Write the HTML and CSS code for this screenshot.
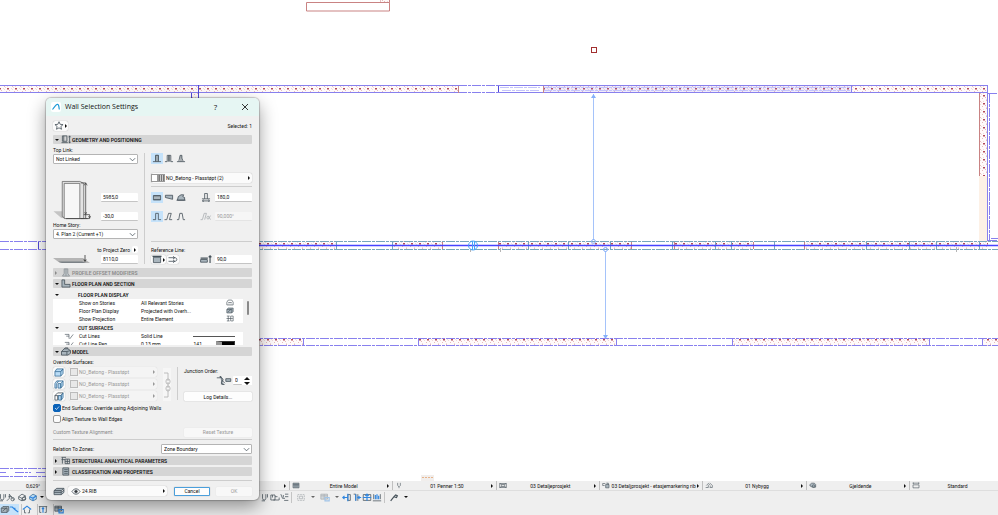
FILE: index.html
```
<!DOCTYPE html>
<html lang="en">
	<head>
		<meta charset="UTF-8">
		<title>Wall Selection Settings</title>
		<link rel="stylesheet" href="styles.css">
	</head>
	<body>
		<svg class="defs" width="0" height="0" aria-hidden="true">
			<defs>
				<pattern id="concrete" width="8" height="8" patternUnits="userSpaceOnUse">
					<rect width="8" height="8" fill="#fffafa"/>
					<path d="M0 1.500h1M6 0.500h1M2 6.500h1M5 5.500h1" stroke="#e6bcbc"/>
					<path d="M3 1.500h1M7 3.500h1M0 4.500h1M6 7.500h1M1 2.500h1" stroke="#f0dada"/>
					<rect x="3" y="3" width="2" height="1.500" fill="#b04a5a"/>
				</pattern>
				<pattern id="concrete-outer" href="#concrete" patternTransform="translate(4 5)"/>
				<pattern id="concrete-side" href="#concrete" patternTransform="translate(4 4)"/>
			</defs>
			<symbol id="wall" viewBox="0 0 12 10"><path d="M1.500 8.500h3v-7h3v7h3"/><path class="f" d="M4.500 1.500h3v7h-3z"/></symbol>
			<symbol id="wall-multi" viewBox="0 0 12 10"><path d="M1.500 8.500h2.500v-7h4v7h2.500M5.400 1.500v7M6.700 1.500v7"/></symbol>
			<symbol id="wall-complex" viewBox="0 0 12 10"><path d="M1.500 8.500h2l1.500-7h2v3l1.500 4h2M6 1.500v7M3.500 8.500h5"/></symbol>
			<symbol id="wall-open" viewBox="0 0 12 10"><path d="M1.500 8.500h3v-7h3v7h3"/></symbol>
			<symbol id="wall-slant" viewBox="0 0 12 10"><path d="M1 8.500h2.500l2-7h3l-2 7h3"/></symbol>
			<symbol id="wall-taper" viewBox="0 0 12 10"><path d="M1.500 8.500h2l1.200-7h2.600l1.200 7h2"/></symbol>
			<symbol id="plan-straight" viewBox="0 0 12 10"><path class="f" d="M2 3h8v4.500h-8z"/><path d="M2 3h8M2 7.500h8"/></symbol>
			<symbol id="plan-trap" viewBox="0 0 12 10"><path class="f" d="M2 2.500h8v4.500l-8-2z"/></symbol>
			<symbol id="plan-poly" viewBox="0 0 12 10"><path class="f" d="M2 8l1-4 3-2h3l-1 2 2 1v3z"/><path d="M1 8h10"/></symbol>
			<symbol id="width" viewBox="0 0 12 10"><path d="M4.500 6.500v-6h3v6M1.500 6.500h9M2 8.800h8M3.500 7.500l-1.500 1.300 1.500 1M8.500 7.500l1.500 1.300-1.500 1"/></symbol>
			<symbol id="angle" viewBox="0 0 12 10"><path d="M0 8.500h2l2-7h2.500l-2 7M11 4l-2.500 4c-2 0-2-3.500 0-3.500l2.500 4"/></symbol>
			<symbol id="refline" viewBox="0 0 12 10"><path class="f" d="M2 2.500h8v6h-8z"/><path d="M1 1.500h10" stroke-width="1.500"/></symbol>
			<symbol id="flip" viewBox="0 0 12 10"><path d="M1 3h7M1 7h7M6 1.500l2 1.500-2 1.500M6 5.500l2 1.500-2 1.500M8 3c3 0 3 4 0 4"/></symbol>
			<symbol id="offset" viewBox="0 0 12 10"><path class="f" d="M0 5h7.500v3h-7.500z"/><path d="M0 3.500h8M10.500 1v8M9 2.500l1.500-1.500 1.500 1.500" stroke-width="1.300"/></symbol>
			<symbol id="geometry" viewBox="0 0 12 10"><path d="M2 1h5v6h-5zM3.500 1v6M1 8.500h7M10 1v8M9 2.500l1-1.500 1 1.500M9 7.500l1 1.500 1-1.500"/></symbol>
			<symbol id="profile" viewBox="0 0 12 10"><path class="f" d="M2 9h8l-2-3v-5h-4v5z"/><path d="M6 1v8"/></symbol>
			<symbol id="floorplan" viewBox="0 0 12 10"><path class="f" d="M1.500 1h3v5h6v3h-9z"/></symbol>
			<symbol id="model" viewBox="0 0 12 10"><path class="f" d="M1 5l3-3h4l3 2v3l-3 2h-7z"/><path d="M1 5h6l4-1M7 5v4M4 2l1-1h3v1"/></symbol>
			<symbol id="structural" viewBox="0 0 12 10"><path d="M1 1.500h5M2 1.500v7M1 4h4M5 3.500h5v5h-5zM7.500 3.500v5M5 6h5"/></symbol>
			<symbol id="classification" viewBox="0 0 12 10"><path class="f" d="M2.500 1h6.500v8h-6.500z"/><path d="M4 3h4M4 5h4M4 7h4"/></symbol>
			<symbol id="stories" viewBox="0 0 12 10"><path d="M1.500 8.500h9v-4l-2-3h-5l-2 3zM3.500 5h5M4 7h1M7 7h1"/></symbol>
			<symbol id="display" viewBox="0 0 12 10"><path class="f" d="M1.500 3.500l2-2h7v5l-2 2h-7z"/><path d="M1.500 3.500h7v5M3 7l5-4"/></symbol>
			<symbol id="projection" viewBox="0 0 12 10"><path d="M1.500 1.500h4M1.500 8.500h4M3.500 1.500v7M7 1.500h3.500v7h-3.500zM1 5h9"/></symbol>
			<symbol id="cutline" viewBox="0 0 12 10"><path d="M0 2h6v6M2 4.500h4M7 8.500l5-6.500"/></symbol>
			<symbol id="surface" viewBox="0 0 12 10"><path class="b" d="M1.500 4h6.500v5h-6.500zM1.500 4l2-3h7l-2.500 3M8 4l2.500-3v5l-2.500 3"/></symbol>
			<symbol id="surface-side" viewBox="0 0 12 10"><path class="b" d="M1.500 4l2-3h7l-2.500 3v5l2.500-3v-5M1.500 4v5h2v-5l2-3M5 4h3v5h-3z"/></symbol>
			<symbol id="surface-end" viewBox="0 0 12 10"><path d="M1.500 4h3v5h-3zM1.500 4l3-3h6l-2.500 3h-3.500"/><path class="b" d="M5.500 4h3v5h-3zM8.500 4l2-3v5l-2 3z"/></symbol>
			<symbol id="star" viewBox="0 0 12 10"><path d="M6 0.800l1.300 2.900 3.200.3-2.400 2.100.7 3.100-2.800-1.600-2.800 1.600.7-3.100-2.400-2.100 3.200-.3z"/></symbol>
			<symbol id="junction" viewBox="0 0 16 10"><path d="M0 2h4v-2l3 4-2 5 4 1M5 4l4 4" /><path class="f" d="M10 3h5.500v3h-5.500zM3 1l3 2-1 5 3 1.500"/></symbol>
			<symbol id="layer" viewBox="0 0 12 10"><path class="f" d="M0.500 4l3-2.500h8l-3 2.500z"/><path class="f" d="M0.500 4v4.500h8v-4.500zM8.500 8.500l3-2.500v-4.500"/><path d="M0.500 6h8l3-2.500"/></symbol>
			<symbol id="eye" viewBox="0 0 12 10"><path d="M1.500 5c2.500-4 6.500-4 9 0c-2.500 4-6.500 4-9 0z"/><circle cx="6" cy="5" r="1.500" fill="#333"/></symbol>
			<symbol id="chevron" viewBox="0 0 8 8"><path d="M1 2.500l3 3 3-3"/></symbol>
			<symbol id="node" viewBox="0 0 12 10"><path d="M1 9l3-3v-5l3 4 3 3M3 4h4"/><circle cx="8" cy="7" r="2"/></symbol>
			<symbol id="cube" viewBox="0 0 12 10"><path d="M2 4l4-3 4 2v4l-4 2-4-2zM2 4l4 2 4-3M6 6v3"/><circle cx="8.500" cy="6.500" r="2"/></symbol>
			<symbol id="plane" viewBox="0 0 12 10"><path class="b" d="M2 4l4-3 4 2v4l-4 2-4-2z"/><path class="a" d="M2 4l4 2 4-3M6 6v3"/></symbol>
			<symbol id="gravity" viewBox="0 0 12 10"><path d="M3 1v5a2 2 0 0 0 4 0v-5M2 9h4M9 1v4"/></symbol>
			<symbol id="guide" viewBox="0 0 12 10"><path d="M1 2h5v6h-5zM6 4h3M4 8h7v-3M3 2v3"/></symbol>
			<symbol id="vee" viewBox="0 0 12 10"><path d="M1 1l2 5h3M6 1h4M6 4h4M5 8.500h5M4 2v3"/></symbol>
			<symbol id="marquee" viewBox="0 0 12 10"><path d="M2 1.500h8v7h-8z" stroke-dasharray="2 1"/><path d="M4 3.500h4v3h-4z"/></symbol>
			<symbol id="align-left" viewBox="0 0 12 10"><path d="M7 1.500h3v7h-3z"/><path class="a" d="M1 5h6M3 3l-2 2 2 2M7 0.500v9"/></symbol>
			<symbol id="align-mid" viewBox="0 0 12 10"><path d="M2 1h2.500v8M7 1v8"/><path class="a" d="M4.500 1v8M7 5h4M9 3.500l-2 1.500 2 1.500"/></symbol>
			<symbol id="align-top" viewBox="0 0 12 10"><path d="M1.500 1.500h9v7h-9z"/><path class="a" d="M1 5h10M6 1v8M4 3l2-2 2 2"/></symbol>
			<symbol id="align-bottom" viewBox="0 0 12 10"><path d="M1 9h10M2 1v6M10 1v6"/><path class="a" d="M4 2v5M6 1v6M8 3v4"/></symbol>
			<symbol id="wand" viewBox="0 0 12 10"><path d="M2 9l4-5 2-2 2 1-1 2-3-1" stroke-width="1.400"/></symbol>
			<symbol id="house" viewBox="0 0 12 10"><path class="a" d="M1 5l5-4 5 4"/><path d="M3 5v4h2M9 5v4h-2"/></symbol>
			<symbol id="text" viewBox="0 0 12 10"><path d="M1 1.500h10M2 1.500v7h2M10 1.500v7h-2"/><path class="a" d="M6 2v7M4.500 4h3"/></symbol>
			<symbol id="window" viewBox="0 0 12 10"><path class="f" d="M1 1h8v6h-8z"/><path d="M1 3h8M5 1v6"/><path class="a" d="M6 5h5v4h-5z"/></symbol>
			<symbol id="snap" viewBox="0 0 12 10"><path class="a" d="M1 2h3l3 3 4 3M7 5v-2"/></symbol>
			<symbol id="screen" viewBox="0 0 12 10"><path class="f" d="M1.500 1.500h9v7h-9z"/><path d="M1.500 4h9M4.500 2v6M7.500 2v6"/></symbol>
			<symbol id="pen" viewBox="0 0 12 10"><path d="M4 1v4l2 2 2-2v-4M6 7v2"/></symbol>
			<symbol id="frame" viewBox="0 0 12 10"><path d="M1 2h10v6h-10zM4 3.500h4v3h-4zM1 2l3 1.500M11 2l-3 1.500M1 8l3-1.500M11 8l-3-1.500"/></symbol>
			<symbol id="override" viewBox="0 0 12 10"><path d="M1 5v-3h4M1 5h3"/><path class="f" d="M5.500 3.500h5v5h-5zM6.500 1.500h3v2"/></symbol>
			<symbol id="renovation" viewBox="0 0 12 10"><path d="M1 8h4v-3l3-3 3 3v3h-4M2 5l4-4M7 6h2"/></symbol>
			<symbol id="cloud" viewBox="0 0 12 10"><path class="f" d="M1 4l3-2.500h4l2 2v4h-5l-3-1.500z"/><circle cx="7" cy="6" r="2"/></symbol>
			<symbol id="dims" viewBox="0 0 12 10"><path d="M1.500 4h9v4.500h-9zM1 1.500h10M2 0.500v2M10 0.500v2"/></symbol>
		</svg>

		<main class="plan">
			<svg class="drawing" role="img" aria-label="Floor plan">
				<!-- loose elements above the building -->
				<path d="M306.500 2.500h83v8.500h-83zM381 2.500v-3M389.500 2.500v-3" class="red"/>
				<rect x="381" y="0" width="8" height="2" fill="url(#concrete)"/>
				<rect x="591.500" y="47.500" width="5" height="5" class="darkred"/>

				<!-- outer wall, top -->
				<rect x="0" y="85" width="458" height="8" fill="url(#concrete-outer)"/>
				<rect x="543" y="85" width="444" height="8" fill="url(#concrete-outer)"/>
				<rect x="543" y="86" width="309" height="6" class="tint"/>
				<path d="M0 85.500h458M499 85.500h488.500M0 92.500h458M499 92.500h488" class="violet"/>
				<path d="M458 85.500h41M458 92.500h41M500 92.500h40" class="violet dash"/>
				<path d="M500 87.500h40M502 90.500h38M543 87.500h309M543 90.500h309" class="pale dash"/>
				<path d="M458.500 86v7M543.500 86v7" class="red"/>
				<path d="M498.500 86v6M198.500 85v13M191.500 93v5" class="blue"/>
				<path d="M851.500 86v6" class="violet"/>
				<rect x="192" y="93" width="6" height="6" fill="url(#concrete)"/>

				<!-- outer wall, right -->
				<rect x="979" y="93" width="8" height="83" fill="url(#concrete-side)"/>
				<rect x="979" y="176" width="8" height="65" fill="#fdf1e6"/>
				<path d="M979.500 93v83" class="red"/>
				<path d="M987.500 85v156" class="violet"/>
				<path d="M989.500 94v146M988 93.500h10M991 238.500h7M988 240.500h10" class="violet dash"/>

				<!-- inner wall, the selected one -->
				<rect x="250" y="241" width="87" height="8" fill="url(#concrete)"/>
				<rect x="392" y="241" width="51" height="8" fill="url(#concrete)"/>
				<rect x="498" y="241" width="134" height="8" fill="url(#concrete)"/>
				<rect x="673" y="241" width="80" height="8" fill="url(#concrete)"/>
				<rect x="804" y="241" width="184" height="8" fill="url(#concrete)"/>
				<path d="M0 241.500h46M0 249.500h46" class="violet dash"/>
				<path d="M38.500 242v7" class="blue"/>
				<path d="M250 241.500h748M250 249.500h748" class="teal dash"/>
				<path d="M336.500 242v7M392.500 242v7M528.500 242v7M568.500 242v7M610.500 242v7M672.500 242v7M715.500 242v7M731.500 242v7M774.500 242v7M866.500 242v7M909.500 242v7M936.500 242v7M979.500 242v7" class="teal"/>
				<path d="M442.500 242v7M498.500 242v7M631.500 242v7M674.500 242v7M753.500 242v7M804.500 242v7" class="red"/>
				<path d="M470.500 249v3M500.500 248v4M956.500 247v5" class="grey"/>
				<path d="M250 245.500h748" class="axis"/>
				<circle cx="473" cy="245.500" r="4.500" class="snap"/>
				<path d="M472.500 241v9M474.500 241v9" class="snap"/>

				<!-- outer wall, bottom -->
				<rect x="250" y="338" width="53" height="8" fill="url(#concrete)"/>
				<rect x="418" y="338" width="199" height="8" fill="url(#concrete)"/>
				<rect x="732" y="338" width="198" height="8" fill="url(#concrete)"/>
				<rect x="982" y="338" width="16" height="8" fill="url(#concrete)"/>
				<path d="M250 338.500h748M250 345.500h748" class="violet dash"/>
				<path d="M303.500 338v8M418.500 338v8M616.500 338v8M732.500 338v8M929.500 338v8M982.500 338v8" class="violet"/>

				<path d="M0 468.500h46M0 476.500h46M0 472.500h6M15 472.500h16M36 472.500h10" class="violet dash"/>

				<!-- distance guides -->
				<path d="M593.500 94v146M605.500 251v87" class="guide"/>
				<path d="M591 98l2.500-4 2.500 4zM603 335l2.500 4 2.500-4z" class="tip"/>
				<circle cx="593.500" cy="241.500" r="2" class="handle"/>
				<circle cx="605.500" cy="249.500" r="2" class="handle"/>

				<rect x="421" y="475" width="13" height="6" fill="#f1eeec"/>
				<path d="M422 477.500h11" stroke="#e8b48c" stroke-dasharray="2 1"/>
			</svg>
		</main>

		<footer class="app-bars">
			<div class="quick-options">
				<div class="cell zoom"><span>0,629°</span><i class="tri"></i></div>
				<div class="cell"><svg class="icon"><use href="#screen"/></svg><span>Entire Model</span><i class="tri"></i></div>
				<div class="cell"><svg class="icon"><use href="#pen"/></svg><span>01 Penner 1:50</span><i class="tri"></i></div>
				<div class="cell"><svg class="icon"><use href="#frame"/></svg><span>03 Detaljeprosjekt</span><i class="tri"></i></div>
				<div class="cell"><svg class="icon"><use href="#override"/></svg><span>03 Detaljprosjekt - etasjemarkering rib</span><i class="tri"></i></div>
				<div class="cell"><svg class="icon"><use href="#renovation"/></svg><span>01 Nybygg</span><i class="tri"></i></div>
				<div class="cell"><svg class="icon"><use href="#cloud"/></svg><span>Gjeldende</span><i class="tri"></i></div>
				<div class="cell"><svg class="icon"><use href="#dims"/></svg><span>Standard</span></div>
			</div>
			<div class="toolbar">
				<div class="group under">
					<button class="tool narrow" aria-label="Plane"><svg class="icon"><use href="#gravity"/></svg></button>
					<button class="tool" aria-label="Node"><svg class="icon"><use href="#node"/></svg></button>
					<button class="tool" aria-label="Rotate"><svg class="icon"><use href="#cube"/></svg></button>
					<button class="tool" aria-label="Editing plane"><svg class="icon"><use href="#plane"/></svg></button>
					<i class="tri down"></i>
				</div>
				<div class="group guides">
					<button class="tool" aria-label="Gravity"><svg class="icon"><use href="#gravity"/></svg></button>
					<button class="tool" aria-label="Guide lines"><svg class="icon"><use href="#guide"/></svg></button>
					<button class="tool" aria-label="Trace"><svg class="icon"><use href="#vee"/></svg></button>
				</div>
				<div class="group wide">
					<button class="tool dim" aria-label="Group"><svg class="icon"><use href="#marquee"/></svg></button>
					<i class="tri down soft"></i>
					<button class="tool dim" aria-label="Ungroup"><svg class="icon"><use href="#window"/></svg></button>
					<i class="tri down soft"></i>
				</div>
				<div class="group last">
					<button class="tool" aria-label="Align left"><svg class="icon"><use href="#align-left"/></svg></button>
					<button class="tool" aria-label="Align middle"><svg class="icon"><use href="#align-mid"/></svg></button>
					<button class="tool" aria-label="Align top"><svg class="icon"><use href="#align-top"/></svg></button>
					<button class="tool" aria-label="Align bottom"><svg class="icon"><use href="#align-bottom"/></svg></button>
				</div>
				<div class="group wide end">
					<button class="tool" aria-label="Magic wand"><svg class="icon"><use href="#wand"/></svg></button>
					<i class="tri down"></i>
				</div>
			</div>
			<div class="toolbar second">
				<div class="group snaps">
					<button class="tool on narrow" aria-label="Snap grid"><svg class="icon"><use href="#display"/></svg></button>
					<button class="tool on" aria-label="Snap guide"><svg class="icon"><use href="#snap"/></svg></button>
				</div>
				<div class="group lone"><button class="tool" aria-label="Roof"><svg class="icon"><use href="#house"/></svg></button></div>
				<div class="group lone"><button class="tool" aria-label="Text"><svg class="icon"><use href="#text"/></svg></button></div>
				<div class="group lone end"><button class="tool" aria-label="Window"><svg class="icon"><use href="#window"/></svg></button></div>
			</div>
		</footer>

		<form class="dialog">
			<header class="titlebar">
				<svg class="logo" viewBox="0 0 10 10"><rect width="10" height="10" rx="2" fill="#fff"/><path d="M1.500 7.500l3-3.800c1.500-2 3-1.500 3.300.5l.5 3.300" fill="none" stroke="#1899d6" stroke-width="1.200"/></svg>
				<h1>Wall Selection Settings</h1>
				<button type="button" class="wbtn" aria-label="Help">?</button>
				<button type="button" class="wbtn" aria-label="Close"><svg viewBox="0 0 8 8"><path d="M1 1l6 6M7 1l-6 6" stroke="#222" stroke-width="0.900"/></svg></button>
			</header>
			<div class="content">
				<div class="favorites">
					<button type="button" class="pop small" aria-label="Favorites"><svg class="icon"><use href="#star"/></svg><i class="tri"></i></button>
					<span>Selected: 1</span>
				</div>

				<h2 class="section"><i class="tri down"></i><svg class="icon"><use href="#geometry"/></svg>GEOMETRY AND POSITIONING</h2>
				<div class="geometry">
					<div class="col">
						<label for="toplink">Top Link:</label>
						<div class="select"><select id="toplink"><option>Not Linked</option></select><svg class="chev"><use href="#chevron"/></svg></div>
						<div class="heights">
							<svg class="figure" viewBox="0 0 40 42">
								<path d="M0 32h9l4 7h-5z" fill="#c4c4c4"/>
								<path d="M9 1.500h18l4 2v36h-18l-4-2z" fill="#e3e3e3" stroke="#555" stroke-width="0.700"/>
								<path d="M11 3.500h16v36h-16z" fill="#f7f7f7" stroke="#555" stroke-width="0.700"/>
								<path d="M28 3h5v36M31.500 5.500l1.500-2.500 1.500 2.500M28 39.500h9v-4h-6M32 33l1 2 1-2M36 37l1 2 1-2M13 39.500h22" fill="none" stroke="#444" stroke-width="0.800"/>
							</svg>
							<div class="stack">
								<input type="text" value="5985,0" aria-label="Wall height">
								<input type="text" value="-30,0" aria-label="Base offset">
							</div>
						</div>
						<label for="story">Home Story:</label>
						<div class="select"><select id="story"><option>4. Plan 2 (Current +1)</option></select><svg class="chev"><use href="#chevron"/></svg></div>
						<div class="caption right"><label for="zero">to Project Zero</label><button type="button" class="dot" aria-label="Reference level"><i class="tri"></i></button></div>
						<div class="row spread">
							<svg class="ground" viewBox="0 0 38 9"><path d="M0 3h30l7 5h-30z" fill="#b5b5b5"/><path d="M5 6.500h24l4 1.500h-24z" fill="#7b8186"/><path d="M32 0v6M30.800 4.500l1.200 2 1.200-2" stroke="#333" fill="none" stroke-width="0.800"/></svg>
							<input type="text" id="zero" value="8110,0">
						</div>
					</div>
					<div class="rule"></div>
					<div class="col">
						<div class="row tools build-row">
							<button type="button" class="tool on" aria-label="Basic"><svg class="icon"><use href="#wall"/></svg></button>
							<button type="button" class="tool" aria-label="Composite"><svg class="icon"><use href="#wall-multi"/></svg></button>
							<button type="button" class="tool" aria-label="Profile"><svg class="icon"><use href="#wall-complex"/></svg></button>
						</div>
						<button type="button" class="pop material"><i class="swatch"></i><i class="swatch hatch"></i><span>NO_Betong - Plasstøpt (2)</span><i class="tri"></i></button>
						<hr class="near">
						<div class="row tools shape-row">
							<button type="button" class="tool on" aria-label="Straight"><svg class="icon"><use href="#plan-straight"/></svg></button>
							<button type="button" class="tool" aria-label="Trapezoid"><svg class="icon"><use href="#plan-trap"/></svg></button>
							<button type="button" class="tool" aria-label="Polygon"><svg class="icon"><use href="#plan-poly"/></svg></button>
							<svg class="icon push"><use href="#width"/></svg>
							<input type="text" value="180,0" aria-label="Thickness">
						</div>
						<div class="row tools slant-row">
							<button type="button" class="tool on" aria-label="Vertical"><svg class="icon"><use href="#wall-open"/></svg></button>
							<button type="button" class="tool" aria-label="Slanted"><svg class="icon"><use href="#wall-slant"/></svg></button>
							<button type="button" class="tool" aria-label="Double slanted"><svg class="icon"><use href="#wall-taper"/></svg></button>
							<svg class="icon push dim"><use href="#angle"/></svg>
							<input type="text" value="90,000°" aria-label="Angle" disabled>
						</div>
						<hr class="far">
						<div class="caption"><label for="refoffset">Reference Line:</label></div>
						<div class="row tools">
							<button type="button" class="pop small" aria-label="Location"><svg class="icon"><use href="#refline"/></svg><i class="tri"></i></button>
							<button type="button" class="pop flip" aria-label="Flip"><svg class="icon"><use href="#flip"/></svg></button>
							<svg class="icon push"><use href="#offset"/></svg>
							<input type="text" id="refoffset" value="90,0">
						</div>
					</div>
				</div>

				<h2 class="section off"><i class="tri"></i><svg class="icon"><use href="#profile"/></svg>PROFILE OFFSET MODIFIERS</h2>
				<h2 class="section"><i class="tri down"></i><svg class="icon"><use href="#floorplan"/></svg>FLOOR PLAN AND SECTION</h2>
				<div class="list">
					<table>
						<colgroup><col class="c-icon"><col class="c-name"><col class="c-value"><col></colgroup>
						<tr class="head"><th><i class="tri down"></i></th><th colspan="3">FLOOR PLAN DISPLAY</th></tr>
						<tr><td></td><td>Show on Stories</td><td>All Relevant Stories</td><td><svg class="icon"><use href="#stories"/></svg></td></tr>
						<tr><td></td><td>Floor Plan Display</td><td>Projected with Overh...</td><td><svg class="icon"><use href="#display"/></svg></td></tr>
						<tr><td></td><td>Show Projection</td><td>Entire Element</td><td><svg class="icon"><use href="#projection"/></svg></td></tr>
						<tr class="head"><th><i class="tri down"></i></th><th colspan="3">CUT SURFACES</th></tr>
						<tr><td><svg class="icon"><use href="#cutline"/></svg></td><td>Cut Lines</td><td>Solid Line</td><td><i class="line"></i></td></tr>
						<tr><td><svg class="icon"><use href="#cutline"/></svg></td><td>Cut Line Pen</td><td>0.13 mm</td><td><span>141</span><i class="penbox"></i></td></tr>
					</table>
					<i class="thumb"></i>
				</div>

				<h2 class="section"><i class="tri down"></i><svg class="icon"><use href="#model"/></svg>MODEL</h2>
				<div class="model">
					<div class="surfaces">
						<p>Override Surfaces:</p>
						<div class="surface"><button type="button" class="pop cubebtn" aria-label="Reference side"><svg class="icon"><use href="#surface"/></svg></button><button type="button" class="pop mat" disabled><i class="swatch"></i><span>NO_Betong - Plasstøpt</span><i class="tri"></i></button></div>
						<div class="surface"><button type="button" class="pop cubebtn" aria-label="Edge"><svg class="icon"><use href="#surface-side"/></svg></button><button type="button" class="pop mat" disabled><i class="swatch"></i><span>NO_Betong - Plasstøpt</span><i class="tri"></i></button></div>
						<div class="surface"><button type="button" class="pop cubebtn" aria-label="Opposite side"><svg class="icon"><use href="#surface-end"/></svg></button><button type="button" class="pop mat" disabled><i class="swatch"></i><span>NO_Betong - Plasstøpt</span><i class="tri"></i></button></div>
					</div>
					<button type="button" class="chain" aria-label="Link surfaces" disabled><svg viewBox="0 0 8 32"><path d="M1 4h4v8M1 28h4v-8"/><rect x="3" y="10" width="4" height="5" rx="2"/><rect x="3" y="17" width="4" height="5" rx="2"/><path d="M5 13v6"/></svg></button>
					<div class="rule"></div>
					<div class="junction">
						<label for="order">Junction Order:</label>
						<div class="row order">
							<svg class="icon"><use href="#junction"/></svg>
							<input type="text" id="order" value="0">
							<button type="button" class="spin" aria-label="Step"><i class="tri up"></i><i class="tri down"></i></button>
						</div>
						<button type="button" class="btn">Log Details...</button>
					</div>
				</div>
				<label class="check"><input type="checkbox" checked>End Surfaces: Override using Adjoining Walls</label>
				<label class="check"><input type="checkbox">Align Texture to Wall Edges</label>
				<div class="texture"><span>Custom Texture Alignment:</span><button type="button" class="btn" disabled>Reset Texture</button></div>
				<hr>
				<div class="zones">
					<label for="zones">Relation To Zones:</label>
					<div class="select"><select id="zones"><option>Zone Boundary</option></select><svg class="chev"><use href="#chevron"/></svg></div>
				</div>
				<h2 class="section"><i class="tri"></i><svg class="icon"><use href="#structural"/></svg>STRUCTURAL ANALYTICAL PARAMETERS</h2>
				<h2 class="section"><i class="tri"></i><svg class="icon"><use href="#classification"/></svg>CLASSIFICATION AND PROPERTIES</h2>
				<hr class="base">
				<div class="actions">
					<svg class="icon"><use href="#layer"/></svg>
					<button type="button" class="pop layer"><svg class="icon"><use href="#eye"/></svg><span>24.RIB</span><i class="tri"></i></button>
					<button type="button" class="btn primary">Cancel</button>
					<button type="submit" class="btn" disabled>OK</button>
				</div>
			</div>
		</form>
	</body>
</html>
```
FILE: styles.css
```
*{
	margin:0;
	padding:0;
	box-sizing:border-box;
}
body{
	height:100vh;
	display:flex;
	flex-direction:column;
	overflow:hidden;
	background:#fff;
	color:#111;
	font:5px/8px Roboto, "Open Sans", sans-serif;
}
button,
input,
select{
	font:inherit;
	color:inherit;
	border:none;
	background:none;
	min-width:0;
}
.defs{
	position:absolute;
}

/* icons */
.icon,
.chev{
	flex:none;
	width:12px;
	height:9px;
	fill:none;
	stroke:#46525a;
	stroke-width:0.900;
}
.chev{
	width:7px;
	height:7px;
}
.f{
	fill:#a9b5bd;
}
.b{
	fill:#b9dcf6;
	stroke:#3c6f98;
}
.a{
	stroke:#2f86e0;
	stroke-width:1.400;
}
.dim{
	opacity:0.4;
}
.tri{
	flex:none;
	width:0;
	height:0;
	border:2px solid transparent;
	border-left-color:currentColor;
	border-right-width:0;
}
.tri.down{
	border:2px solid transparent;
	border-top-color:currentColor;
	border-bottom-width:0;
}
.tri.up{
	border:2px solid transparent;
	border-bottom-color:currentColor;
	border-top-width:0;
}

/* floor plan */
.plan{
	flex:1;
	min-height:0;
}
.drawing{
	display:block;
	width:100%;
	height:100%;
}
.drawing path,
.drawing circle,
.darkred{
	fill:none;
}
.red{
	stroke:#c98383;
}
.darkred{
	stroke:#a23030;
}
.violet{
	stroke:#8880ee;
}
.blue{
	stroke:#5148d8;
}
.pale{
	stroke:#c4c4fa;
}
.tint{
	fill:#8a84ff;
	opacity:0.12;
}
.teal{
	stroke:#76a6bd;
}
.grey{
	stroke:#b5b5b5;
}
.axis{
	stroke:#4844ff;
	stroke-width:1.300;
}
.snap{
	stroke:#46a4f8;
}
.dash{
	stroke-dasharray:9 1 3 1;
}
.guide{
	stroke:#a5c3fa;
}
.drawing .handle{
	stroke:#86b0fa;
}
.drawing .tip{
	fill:#86b0fa;
}

/* bars at the bottom of the window */
.app-bars{
	flex:none;
	height:34px;
	background:#efefef;
}
.quick-options{
	display:grid;
	grid-template-columns:289px repeat(6, 1fr) 89px;
	height:10px;
	border-bottom:1px solid #dedede;
}
.cell{
	display:flex;
	align-items:center;
	padding:0 3px 0 2px;
	border-left:1px solid #c0c0c0;
	white-space:nowrap;
	min-width:0;
}
.cell .icon{
	width:8px;
	height:7px;
}
.cell span{
	flex:1;
	text-align:center;
}
.cell.zoom{
	border:none;
}
.cell.zoom span{
	text-align:left;
	padding-left:24px;
}
.toolbar{
	display:flex;
	align-items:center;
	height:12px;
}
.group{
	display:flex;
	align-items:center;
	height:11px;
	border-right:1px solid #c4c4c4;
}
.group .tool{
	width:10px;
}
.group .tool .icon{
	width:10px;
}
.group.under{
	width:260px;
	border:none;
}
.group.under .tool{
	width:11px;
}
.group.under .narrow{
	width:5px;
}
.group.under .tri{
	margin-left:2px;
}
.group.guides{
	padding-right:1px;
}
.group.wide{
	gap:5px;
	padding-left:4px;
	border:none;
}
.group.last{
	padding:0 2px 0 3px;
}
.group.snaps{
	width:22px;
	padding-right:2px;
}
.group.snaps .narrow{
	width:8px;
}
.group.snaps .tool{
	flex:1;
}
.group.lone{
	padding-right:5px;
}
.group.end{
	border:none;
}
.soft{
	color:#666;
}
.tool{
	display:flex;
	align-items:center;
	justify-content:center;
	width:12px;
	height:11px;
}
.tool.on{
	background:#c5e2fa;
}

/* settings dialog, lies over the plan and the bars */
.dialog{
	position:absolute;
	left:46px;
	top:98px;
	width:213px;
	background:#f0f0f0;
	border-radius:5px;
	box-shadow:0 0 1px 1px rgba(0,0,0,0.2), 0 7px 18px rgba(0,0,0,0.4);
}
.titlebar{
	display:flex;
	align-items:center;
	height:18px;
	padding:0 7px 0 5px;
	border-radius:5px 5px 0 0;
	background:#e6f6f3;
}
.logo{
	width:10px;
	height:10px;
	margin-right:4px;
}
.titlebar h1{
	flex:1;
	font:7px/10px "Open Sans", sans-serif;
}
.wbtn{
	display:flex;
	align-items:center;
	justify-content:center;
	width:15px;
	height:12px;
	margin-left:14px;
	font:8px/10px "Open Sans", sans-serif;
}
.wbtn svg{
	width:8px;
	height:8px;
}
.content{
	padding:4px 7px;
	white-space:nowrap;
}
.favorites{
	display:flex;
	justify-content:space-between;
	align-items:center;
	height:11px;
	margin-bottom:4px;
}
.section{
	display:flex;
	align-items:center;
	height:9px;
	padding-left:2px;
	margin-bottom:2px;
	border-radius:1px;
	background:#d5d5d5;
	font-size:5px;
	line-height:8px;
	font-weight:600;
}
.section .tri{
	width:4px;
	margin-right:1px;
}
.section.off{
	color:#8a8a8a;
}
.section.off .icon{
	opacity:0.5;
}
.row{
	display:flex;
	align-items:center;
}
.spread{
	justify-content:space-between;
}
hr{
	height:1px;
	border:none;
	background:#cdcdcd;
}
.rule{
	width:1px;
	background:#cdcdcd;
}

/* controls */
input[type=text]{
	width:37px;
	height:9px;
	padding:0 2px;
	background:#fff;
	border-bottom:1px solid #c4c4c4;
	border-radius:1px;
}
input[type=text]:disabled{
	color:#999;
	background:#f6f6f6;
	border-color:#e4e4e4;
}
.select{
	display:grid;
	align-items:center;
}
.select select,
.select .chev{
	grid-area:1 / 1;
}
.select select{
	appearance:none;
	width:100%;
	height:10px;
	padding:0 2px;
	background:#fff;
	border:1px solid #b4b4b4;
	border-radius:1px;
}
.select .chev{
	justify-self:end;
	margin-right:2px;
	pointer-events:none;
}
.pop{
	display:flex;
	align-items:center;
	height:10px;
	padding:0 2px;
	background:#fbfbfb;
	border-radius:2px;
	box-shadow:0 0 1px rgba(0,0,0,0.35);
}
.pop:disabled{
	color:#999;
	background:#f4f4f4;
	box-shadow:0 0 1px rgba(0,0,0,0.15);
}
.pop.small{
	padding:0 1px 0 0;
}
.pop span{
	flex:1;
	text-align:left;
}
.btn{
	height:9px;
	background:#fdfdfd;
	border-radius:1px;
	box-shadow:0 0 1px rgba(0,0,0,0.4);
	line-height:8px;
}
.btn:disabled{
	color:#999;
	background:#f8f8f8;
	box-shadow:0 0 1px rgba(0,0,0,0.15);
}
.btn.primary{
	border:1px solid #4a9fdc;
	line-height:7px;
}
.swatch{
	flex:none;
	width:7px;
	height:8px;
	border:1px solid #999;
	background:#fff;
}
.swatch.hatch{
	margin-right:1px;
	background:repeating-linear-gradient(90deg, #777 0 1px, #ccc 1px 2px);
}
.check{
	display:flex;
	align-items:center;
	gap:1px;
	height:11px;
}
.check input{
	appearance:none;
	width:8px;
	height:8px;
	background:#fbfbfb;
	border:1px solid #999;
	border-radius:2px;
}
.check input:checked{
	border-color:#0a62b8;
	background:#0a62b8 url("data:image/svg+xml,%3Csvg xmlns='http://www.w3.org/2000/svg' viewBox='0 0 6 6'%3E%3Cpath d='M1 3l1.500 1.500 2.500-3' fill='none' stroke='white' stroke-width='.7'/%3E%3C/svg%3E") center / 6px;
}

/* geometry and positioning */
.geometry{
	display:grid;
	grid-template-columns:85fr 1px 101fr;
	gap:6px;
	margin-bottom:4px;
}
.geometry .rule{
	margin-top:7px;
}
.geometry label{
	display:block;
}
.heights{
	display:flex;
	justify-content:space-between;
	height:41px;
	margin-top:16px;
}
.figure{
	width:40px;
	height:41px;
}
.stack{
	display:flex;
	flex-direction:column;
	justify-content:flex-end;
	gap:10px;
}
.caption{
	display:flex;
	align-items:center;
	height:9px;
	margin:6px 0 1px;
}
.caption.right{
	justify-content:flex-end;
	gap:2px;
}
.dot{
	display:flex;
	align-items:center;
	justify-content:center;
	width:6px;
	height:7px;
	background:#fff;
	border-radius:2px;
}
.ground{
	width:38px;
	height:9px;
}
.build-row{
	margin-top:7px;
}
.material{
	width:100%;
	margin-top:9px;
	padding-left:0;
}
.near{
	margin-top:3px;
}
.shape-row{
	margin-top:5px;
}
.slant-row{
	margin-top:8px;
}
.far{
	margin-top:19px;
}
.geometry hr + .caption{
	margin-top:3px;
}
.push{
	margin-left:auto;
	margin-right:3px;
}
.tools .pop{
	height:9px;
}
.pop.flip{
	margin-left:1px;
	padding:0;
}

/* floor plan and section */
.list{
	display:flex;
	align-items:flex-start;
	justify-content:space-between;
	height:55px;
	margin-bottom:2px;
	overflow:hidden;
}
.list table{
	width:190px;
	table-layout:fixed;
	border-collapse:collapse;
	background:#fff;
}
.c-icon{
	width:25px;
}
.c-name{
	width:63px;
}
.c-value{
	width:52px;
}
.list tr{
	height:8px;
}
.list .head{
	height:9px;
	background:#f0f0f0;
}
.list td,
.list th{
	text-align:left;
	line-height:8px;
}
.list th{
	font-weight:600;
}
.list td:nth-child(2){
	padding-left:1px;
}
.list td:nth-child(1) .icon{
	display:block;
	margin-left:11px;
}
.list th .tri{
	display:block;
	margin-left:2px;
}
.list td:nth-child(4){
	padding-right:8px;
	text-align:right;
}
.list td .icon{
	display:inline-block;
	width:10px;
	height:7px;
	vertical-align:top;
}
.line{
	display:block;
	height:1px;
	background:#555;
}
.penbox{
	display:inline-block;
	width:19px;
	height:6px;
	margin:1px 0 0 14px;
	border:1px solid #333;
	border-left-width:6px;
	border-left-color:#999;
	background:#000;
	vertical-align:top;
}
.thumb{
	width:2px;
	height:14px;
	margin:11px 3px 0 0;
	background:#8a8a8a;
	border-radius:1px;
}

/* model */
.model{
	display:flex;
	gap:6px;
	height:44px;
}
.surfaces{
	flex:1;
	display:flex;
	flex-direction:column;
	gap:2px;
}
.surfaces p{
	height:7px;
}
.surface{
	display:flex;
	gap:4px;
}
.cubebtn{
	padding:0;
}
.mat{
	flex:1;
	padding-left:1px;
}
.mat .swatch{
	width:8px;
	margin-right:1px;
	background:#e8e8e8;
	border-color:#bbb;
}
.chain{
	width:8px;
	height:33px;
	margin-top:10px;
	background:#f6f6f6;
}
.chain svg{
	display:block;
	fill:none;
	stroke:#b0b0b0;
	stroke-width:0.800;
}
.model .rule{
	margin:9px 0 2px;
}
.junction{
	display:flex;
	flex-direction:column;
	width:68px;
	padding-top:9px;
}
.order{
	justify-content:flex-end;
	height:11px;
	margin-bottom:6px;
}
.order .icon{
	width:16px;
	margin-right:1px;
}
.order input[type=text]{
	width:9px;
}
.spin{
	display:flex;
	flex-direction:column;
	align-items:center;
	justify-content:center;
	gap:2px;
	width:10px;
	height:9px;
	background:#fff;
}
.spin .tri{
	border-width:3px;
}
.spin .tri.down{
	border-bottom-width:0;
}
.spin .tri.up{
	border-top-width:0;
}
.texture{
	display:flex;
	justify-content:space-between;
	align-items:center;
	height:10px;
	margin:3px 0 2px;
	color:#888;
}
.texture .btn{
	width:68px;
}
.zones{
	display:flex;
	justify-content:space-between;
	align-items:center;
	margin:4px 0 2px;
}
.zones .select{
	width:91px;
}

/* dialog footer */
.base{
	margin-top:4px;
}
.actions{
	display:flex;
	align-items:center;
	margin-top:5px;
}
.layer{
	flex:1;
	margin:0 7px 0 3px;
}
.actions .btn{
	width:36px;
}
.actions .primary{
	margin-right:6px;
}
```
